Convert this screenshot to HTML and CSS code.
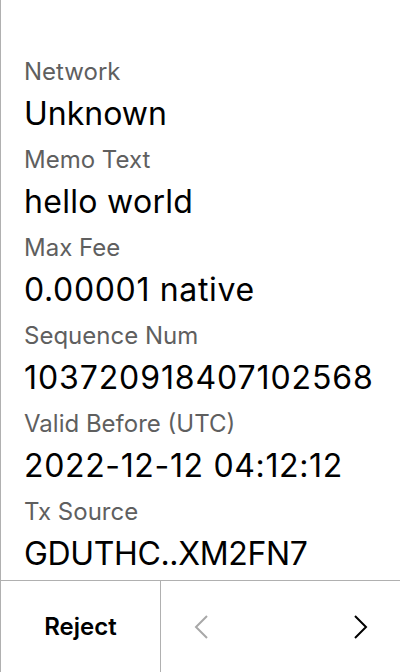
FILE: index.html
```
<!DOCTYPE html>
<html>
<head>
<meta charset="utf-8">
<link rel="stylesheet" href="styles.css">
</head>
<body>
<div class="screen">
  <div class="content">
    <div class="item"><div class="label">Network</div><div class="value">Unknown</div></div>
    <div class="item"><div class="label">Memo Text</div><div class="value loose">hello world</div></div>
    <div class="item"><div class="label">Max Fee</div><div class="value mid">0.00001 native</div></div>
    <div class="item"><div class="label">Sequence Num</div><div class="value num">103720918407102568</div></div>
    <div class="item"><div class="label">Valid Before (UTC)</div><div class="value mid">2022-12-12 04:12:12</div></div>
    <div class="item"><div class="label">Tx Source</div><div class="value tight">GDUTHC..XM2FN7</div></div>
  </div>
  <div class="footer">
    <div class="reject">Reject</div>
    <div class="nav">
      <svg class="chev" width="14" height="24" viewBox="0 0 14 24"><path d="M13 1 L2 12 L13 23" fill="none" stroke="#a8a8a8" stroke-width="2"/></svg>
      <svg class="chev" width="14" height="24" viewBox="0 0 14 24"><path d="M1 1 L12 12 L1 23" fill="none" stroke="#000" stroke-width="2"/></svg>
    </div>
  </div>
</div>
</body>
</html>
```
FILE: styles.css
```
html, body { margin: 0; padding: 0; background: #fff; }
body { font-family: Inter, "Noto Sans", sans-serif; }
.screen {
  width: 400px; height: 672px; box-sizing: border-box;
  border-left: 1px solid #b0b0b0;
  display: flex; flex-direction: column;
}
.content {
  flex: 1;
  padding: 54px 0 0 23px;
  display: flex; flex-direction: column; gap: 4px;
}
.label { font-size: 24px; line-height: 36px; color: #5f5f5f; }
.value { font-size: 32px; line-height: 48px; color: #000; }
.value.loose { letter-spacing: 0.3px; }
.value.mid { letter-spacing: 0.65px; }
.value.num { letter-spacing: 0.9px; }
.value.tight { letter-spacing: -0.35px; }
.footer {
  height: 92px; box-sizing: border-box;
  border-top: 1px solid #b0b0b0;
  display: flex;
}
.reject {
  width: 159px; display: flex; align-items: center; justify-content: center;
  font-size: 24px; font-weight: 600; color: #000;
  border-right: 1px solid #b0b0b0;
}
.nav {
  flex: 1; display: flex; align-items: center; justify-content: space-between;
  padding: 0 32px 0 33px;
}
.chev { display: block; }
```
